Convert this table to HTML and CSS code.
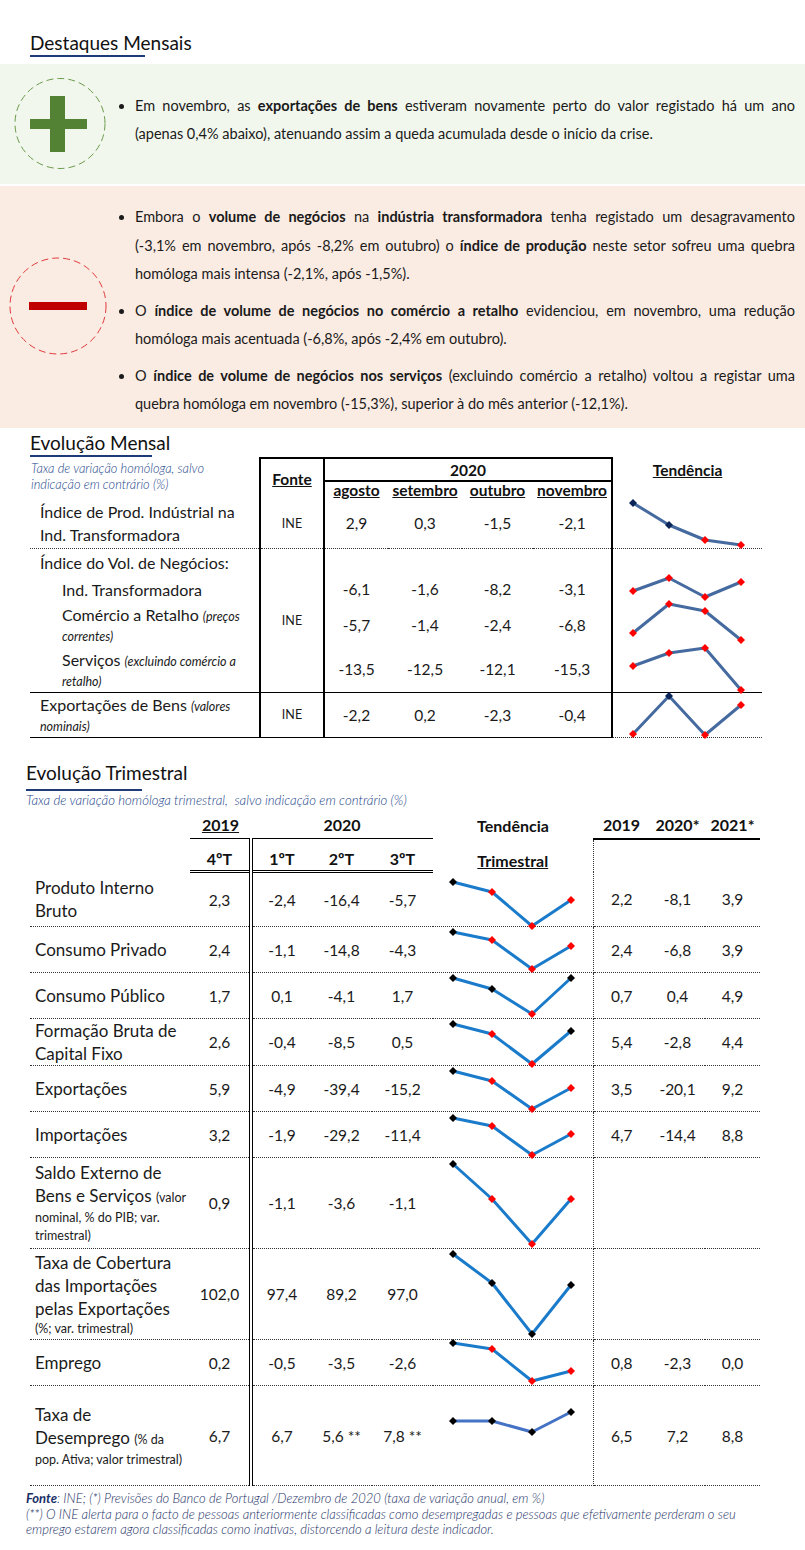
FILE: index.html
```html
<!DOCTYPE html>
<html lang="pt">
<head>
  <meta charset="UTF-8">
  <meta name="viewport" content="width=device-width, initial-scale=1.0">
  <title>Destaques Mensais</title>
  <link rel="stylesheet" href="styles.css">
</head>
<body>
  <h2 class="section-title top">Destaques Mensais</h2>

  <div class="highlight positive">
    <svg class="badge" width="118" height="120" viewBox="0 0 118 120">
      <circle cx="60" cy="59.5" r="45" fill="none" stroke="#6b9a4b" stroke-width="1" stroke-dasharray="7 4"/>
      <rect x="50" y="32" width="15" height="56" fill="#548235"/>
      <rect x="30" y="55" width="57" height="10" fill="#548235"/>
    </svg>
    <ul class="points">
      <li>Em novembro, as <b>exportações de bens</b> estiveram novamente perto do valor registado há um ano (apenas 0,4% abaixo), atenuando assim a queda acumulada desde o início da crise.</li>
    </ul>
  </div>

  <div class="highlight negative">
    <svg class="badge" width="118" height="242" viewBox="0 0 118 242">
      <circle cx="58" cy="120" r="48" fill="none" stroke="#e0393b" stroke-width="1" stroke-dasharray="7 4"/>
      <rect x="29" y="116" width="58" height="8" fill="#c00000"/>
    </svg>
    <ul class="points">
      <li>Embora o <b>volume de negócios</b> na <b>indústria transformadora</b> tenha registado um desagravamento (-3,1%&nbsp;em novembro, após -8,2% em outubro) o <b>índice de produção</b> neste setor sofreu uma quebra homóloga mais intensa (-2,1%, após -1,5%).</li>
      <li>O <b>índice de volume de negócios no comércio a retalho</b> evidenciou, em novembro, uma redução homóloga mais acentuada (-6,8%, após -2,4% em outubro).</li>
      <li>O <b>índice de volume de negócios nos serviços</b> (excluindo comércio a retalho) voltou a registar uma quebra homóloga em novembro (-15,3%), superior à do mês anterior (-12,1%).</li>
    </ul>
  </div>

  <h2 class="section-title monthly-title">Evolução Mensal</h2>
  <table class="monthly" data-x="20,56,92,128">
    <colgroup>
      <col class="c-label"><col class="c-src"><col class="c-ago"><col class="c-set"><col class="c-out"><col class="c-nov"><col class="c-trend">
    </colgroup>
    <thead>
      <tr class="row-year">
        <th rowspan="2" class="note-cell">Taxa de variação homóloga, salvo<br>indicação em contrário (%)</th>
        <th rowspan="2" class="src"><u>Fonte</u></th>
        <th colspan="4" class="year">2020</th>
        <th rowspan="2" class="trend-head"><u>Tendência</u></th>
      </tr>
      <tr class="row-months">
        <th class="first"><u>agosto</u></th>
        <th><u>setembro</u></th>
        <th><u>outubro</u></th>
        <th class="last"><u>novembro</u></th>
      </tr>
    </thead>
    <tbody>
      <tr class="row-ipi dotted">
        <td class="label">Índice de Prod. Indústrial na<br>Ind. Transformadora</td>
        <td class="src">INE</td>
        <td class="first">2,9</td><td>0,3</td><td>-1,5</td><td class="last">-2,1</td>
        <td class="trend" data-y="4,26,41,46" data-m="nnrr"></td>
      </tr>
      <tr class="row-group">
        <td class="label">Índice do Vol. de Negócios:</td>
        <td class="src group-end" rowspan="4">INE</td>
        <td class="first"></td><td></td><td></td><td class="last"></td>
        <td class="trend"></td>
      </tr>
      <tr class="row-sub">
        <td class="label sub">Ind. Transformadora</td>
        <td class="first">-6,1</td><td>-1,6</td><td>-8,2</td><td class="last">-3,1</td>
        <td class="trend" data-y="15,2,21,6" data-m="rrrr"></td>
      </tr>
      <tr class="row-sub2">
        <td class="label sub">Comércio a Retalho <i class="note">(preços</i><i class="note-lines">correntes)</i></td>
        <td class="first">-5,7</td><td>-1,4</td><td>-2,4</td><td class="last">-6,8</td>
        <td class="trend" data-y="31,2,9,38" data-m="rrrr"></td>
      </tr>
      <tr class="row-sub2 solid">
        <td class="label sub">Serviços <i class="note">(excluindo comércio a</i><i class="note-lines">retalho)</i></td>
        <td class="first">-13,5</td><td>-12,5</td><td>-12,1</td><td class="last">-15,3</td>
        <td class="trend" data-y="19,6,1,43" data-m="rrrr"></td>
      </tr>
      <tr class="row-sub2 solid">
        <td class="label">Exportações de Bens <i class="note">(valores</i><i class="note-lines">nominais)</i></td>
        <td class="src">INE</td>
        <td class="first">-2,2</td><td>0,2</td><td>-2,3</td><td class="last">-0,4</td>
        <td class="trend open" data-y="41,3,42,12" data-m="rnrr"></td>
      </tr>
    </tbody>
  </table>

  <h2 class="section-title quarter-title">Evolução Trimestral</h2>
  <p class="subtitle">Taxa de variação homóloga trimestral,&nbsp; salvo indicação em contrário (%)</p>
  <table class="quarterly" data-x="20,59,99,138">
    <colgroup>
      <col class="q-label"><col class="q-4t"><col class="q-1t"><col class="q-2t"><col class="q-3t"><col class="q-trend"><col class="q-y"><col class="q-y2"><col class="q-y2">
    </colgroup>
    <thead>
      <tr class="row-years">
        <th></th>
        <th class="yr"><u>2019</u></th>
        <th colspan="3" class="yr">2020</th>
        <th>Tendência</th>
        <th class="ann">2019</th><th class="ann">2020*</th><th class="ann">2021*</th>
      </tr>
      <tr class="row-quarters">
        <th></th>
        <th class="qt split">4ºT</th>
        <th class="qt">1ºT</th><th class="qt">2ºT</th><th class="qt">3ºT</th>
        <th class="sep"><u>Trimestral</u></th>
        <th></th><th></th><th></th>
      </tr>
    </thead>
    <tbody>
      <tr class="row-double">
        <td class="label">Produto Interno<br>Bruto</td>
        <td class="split">2,3</td><td>-2,4</td><td>-16,4</td><td>-5,7</td>
        <td class="trend sep" data-y="10,20,54,28" data-m="brrr"></td>
        <td>2,2</td><td>-8,1</td><td>3,9</td>
      </tr>
      <tr class="row-single">
        <td class="label">Consumo Privado</td>
        <td class="split">2,4</td><td>-1,1</td><td>-14,8</td><td>-4,3</td>
        <td class="trend sep" data-y="5,13,42,19" data-m="brrr"></td>
        <td>2,4</td><td>-6,8</td><td>3,9</td>
      </tr>
      <tr class="row-single">
        <td class="label">Consumo Público</td>
        <td class="split">1,7</td><td>0,1</td><td>-4,1</td><td>1,7</td>
        <td class="trend sep" data-y="5,16,41,5" data-m="bbrb"></td>
        <td>0,7</td><td>0,4</td><td>4,9</td>
      </tr>
      <tr class="row-single">
        <td class="label">Formação Bruta de<br>Capital Fixo</td>
        <td class="split">2,6</td><td>-0,4</td><td>-8,5</td><td>0,5</td>
        <td class="trend sep" data-y="5,15,45,12" data-m="brrb"></td>
        <td>5,4</td><td>-2,8</td><td>4,4</td>
      </tr>
      <tr class="row-single">
        <td class="label">Exportações</td>
        <td class="split">5,9</td><td>-4,9</td><td>-39,4</td><td>-15,2</td>
        <td class="trend sep" data-y="5,15,43,22" data-m="brrr"></td>
        <td>3,5</td><td>-20,1</td><td>9,2</td>
      </tr>
      <tr class="row-single">
        <td class="label">Importações</td>
        <td class="split">3,2</td><td>-1,9</td><td>-29,2</td><td>-11,4</td>
        <td class="trend sep" data-y="6,14,43,22" data-m="brrr"></td>
        <td>4,7</td><td>-14,4</td><td>8,8</td>
      </tr>
      <tr class="row-four">
        <td class="label">Saldo Externo de<br>Bens e Serviços <span class="note">(valor</span><span class="note-lines">nominal, % do PIB; var.<br>trimestral)</span></td>
        <td class="split">0,9</td><td>-1,1</td><td>-3,6</td><td>-1,1</td>
        <td class="trend sep" data-y="6,41,86,41" data-m="brrr"></td>
        <td></td><td></td><td></td>
      </tr>
      <tr class="row-four">
        <td class="label">Taxa de Cobertura<br>das Importações<br>pelas Exportações<span class="note-lines">(%; var. trimestral)</span></td>
        <td class="split">102,0</td><td>97,4</td><td>89,2</td><td>97,0</td>
        <td class="trend sep" data-y="5,34,85,36" data-m="bbbb"></td>
        <td></td><td></td><td></td>
      </tr>
      <tr class="row-single">
        <td class="label">Emprego</td>
        <td class="split">0,2</td><td>-0,5</td><td>-3,5</td><td>-2,6</td>
        <td class="trend sep" data-y="3,9,41,31" data-m="brrr"></td>
        <td>0,8</td><td>-2,3</td><td>0,0</td>
      </tr>
      <tr class="row-last">
        <td class="label">Taxa de<br>Desemprego <span class="note">(% da</span><span class="note-lines">pop. Ativa; valor trimestral)</span></td>
        <td class="split">6,7</td><td>6,7</td><td>5,6 **</td><td>7,8 **</td>
        <td class="trend sep" data-y="35,35,46,26" data-m="bbbb" data-line="#4472c4"></td>
        <td>6,5</td><td>7,2</td><td>8,8</td>
      </tr>
    </tbody>
  </table>

  <div class="footnote">
    <p><b>Fonte</b>: INE; (*) Previsões do Banco de Portugal /Dezembro de 2020 (taxa de variação anual, em %)</p>
    <p>(**) O INE alerta para o facto de pessoas anteriormente classificadas como desempregadas e pessoas que efetivamente perderam o seu emprego estarem agora classificadas como inativas, distorcendo a leitura deste indicador.</p>
  </div>

  <script>
    const markColors = { r: "#ff0000", n: "#0b2559", b: "#000000" };

    // draw the trend sparklines from the data attributes of each cell
    document.querySelectorAll("td[data-y]").forEach((cell) => {
      const xs = cell.closest("table").dataset.x.split(",").map(Number);
      const ys = cell.dataset.y.split(",").map(Number);
      const marks = cell.dataset.m;
      const line = cell.dataset.line ? ` style="stroke:${cell.dataset.line}"` : "";
      const points = xs.map((x, i) => `${x},${ys[i]}`).join(" ");
      const diamonds = xs
        .map(
          (x, i) =>
            `<polygon points="${x},${ys[i] - 4} ${x + 4},${ys[i]} ${x},${ys[i] + 4} ${x - 4},${ys[i]}" fill="${markColors[marks[i]]}"/>`
        )
        .join("");
      cell.innerHTML = `<svg class="spark" width="100%" height="1"><polyline points="${points}"${line}/>${diamonds}</svg>`;
    });
  </script>
</body>
</html>
```

FILE: styles.css
```css
body {
  font-family: Lato, "Liberation Sans", sans-serif;
  color: #1a1a1a;
  background: #fff;
  margin: 0;
}

.section-title {
  font-size: 19px;
  font-weight: normal;
  line-height: 22px;
  color: #111;
  margin: 4px 0 0 30px;
}

.section-title::after {
  content: "";
  display: block;
  width: 115px;
  height: 2px;
  margin-top: 1px;
  background: #1f3a78;
}

.section-title.top {
  margin-top: 32px;
}

.monthly-title::after {
  width: 122px;
}

.section-title.quarter-title {
  margin: 24px 0 0 26px;
}

.quarter-title::after {
  width: 116px;
  margin-top: 5px;
}

.subtitle {
  margin: 2px 0 0 26px;
  font-size: 13.2px;
  font-weight: 300;
  line-height: 15px;
  font-style: italic;
  color: #22448a;
}

/* highlight boxes */
.highlight {
  display: flex;
  align-items: center;
  font-size: 14.5px;
  line-height: 28.5px;
}

.highlight.positive {
  height: 120px;
  margin-top: 7px;
  background: #f2f7ed;
}

.highlight.negative {
  height: 242px;
  margin-top: 2px;
  background: #fbece3;
}

.badge {
  flex: none;
  display: block;
}

.points {
  flex: 1;
  list-style: disc outside;
  margin: 0;
  padding: 0 10px 0 17px;
}

.positive .points {
  padding-bottom: 8px;
}

.negative .points {
  padding-top: 8px;
}

.points li {
  text-align: justify;
}

.points li + li {
  margin-top: 8px;
}

/* monthly table */
.monthly {
  border-collapse: collapse;
  table-layout: fixed;
  width: 732px;
  margin-left: 30px;
}

.c-label { width: 230px; }
.c-src { width: 64px; }
.c-ago { width: 64px; }
.c-set { width: 74px; }
.c-out { width: 71px; }
.c-nov { width: 79px; }
.c-trend { width: 150px; }

.monthly th {
  padding: 0;
  font-size: 15.5px;
  font-weight: bold;
  text-align: center;
  color: #111;
}

.monthly td {
  padding: 0;
  font-size: 15.5px;
  text-align: center;
  vertical-align: middle;
}

.monthly .note-cell {
  font-size: 12.8px;
  font-weight: 300;
  font-style: italic;
  line-height: 16px;
  text-align: left;
  vertical-align: top;
  padding: 2px 0 0 1px;
  color: #22448a;
}

.monthly .src {
  border-left: 2px solid #000;
  border-right: 2px solid #000;
  font-size: 12.5px;
}

.monthly th.src {
  border-top: 2px solid #000;
  font-size: 15.5px;
}

.monthly .year {
  border-top: 2px solid #000;
  border-right: 2px solid #000;
  border-bottom: 2px solid #000;
}

.monthly .last {
  border-right: 2px solid #000;
}

.monthly .trend-head {
  vertical-align: top;
  padding-top: 3px;
}

.row-year { height: 23px; }
.row-months { height: 17px; }
.row-months th { vertical-align: bottom; line-height: 17px; }
.row-ipi { height: 49px; }
.row-group { height: 28px; }
.row-sub { height: 26px; }
.row-sub2 { height: 45px; }

.monthly .label {
  text-align: left;
  font-size: 16px;
  line-height: 23px;
  padding-left: 10px;
}

.monthly .label.sub {
  padding-left: 32px;
}

.monthly .note,
.monthly .note-lines {
  font-size: 12.5px;
}

.monthly .note-lines {
  display: block;
  line-height: 18px;
}

.monthly tr.dotted td {
  border-bottom: 1px dotted #333;
}

.monthly tr.solid td,
.monthly .group-end {
  border-bottom: 1px solid #000;
}

.monthly tr.solid td.open {
  border-bottom: 1px dotted #333;
}

.monthly .trend {
  vertical-align: top;
}

.spark {
  display: block;
  overflow: visible;
}

.spark polyline {
  fill: none;
  stroke: #456a9f;
  stroke-width: 3;
  stroke-linejoin: round;
}

.quarterly .spark polyline {
  stroke: #1b7bcb;
}

/* quarterly table */
.quarterly {
  border-collapse: collapse;
  table-layout: fixed;
  width: 730px;
  margin-left: 30px;
}

.q-label { width: 160px; }
.q-4t { width: 61px; }
.q-1t { width: 60px; }
.q-2t { width: 61px; }
.q-3t { width: 61px; }
.q-trend { width: 160px; }
.q-y { width: 57px; }
.q-y2 { width: 55px; }

.quarterly th {
  padding: 0 0 4px;
  font-size: 16px;
  font-weight: bold;
  text-align: center;
  vertical-align: bottom;
  color: #111;
}

.row-years { height: 31px; }
.row-quarters { height: 33px; }

.quarterly .row-quarters th {
  padding-bottom: 2px;
}

.quarterly .yr {
  border-bottom: 1px solid #000;
}

.quarterly .ann {
  border-bottom: 2px solid #000;
}

.quarterly .qt {
  border-bottom: 3px double #000;
}

.quarterly .split {
  border-right: 4px double #000;
}

.quarterly .sep {
  border-right: 1px dotted #333;
}

.quarterly td {
  padding: 0;
  font-size: 15.5px;
  text-align: center;
  vertical-align: middle;
  border-bottom: 1px dotted #333;
}

.quarterly .label {
  text-align: left;
  font-size: 17px;
  line-height: 23px;
  padding-left: 5px;
}

.quarterly .note,
.quarterly .note-lines {
  font-size: 12.5px;
}

.quarterly .note-lines {
  display: block;
  line-height: 18px;
}

.quarterly .trend {
  vertical-align: top;
}

.row-double { height: 55px; }
.row-single { height: 46px; }
.row-four { height: 91px; }
.row-last { height: 100px; }

.footnote {
  margin: 5px 0 0 26px;
  width: 750px;
  font-size: 13px;
  font-weight: 300;
  line-height: 15.5px;
  font-style: italic;
  color: #1a2f66;
}

.footnote p {
  margin: 0;
}

.footnote b {
  font-weight: bold;
}
```
